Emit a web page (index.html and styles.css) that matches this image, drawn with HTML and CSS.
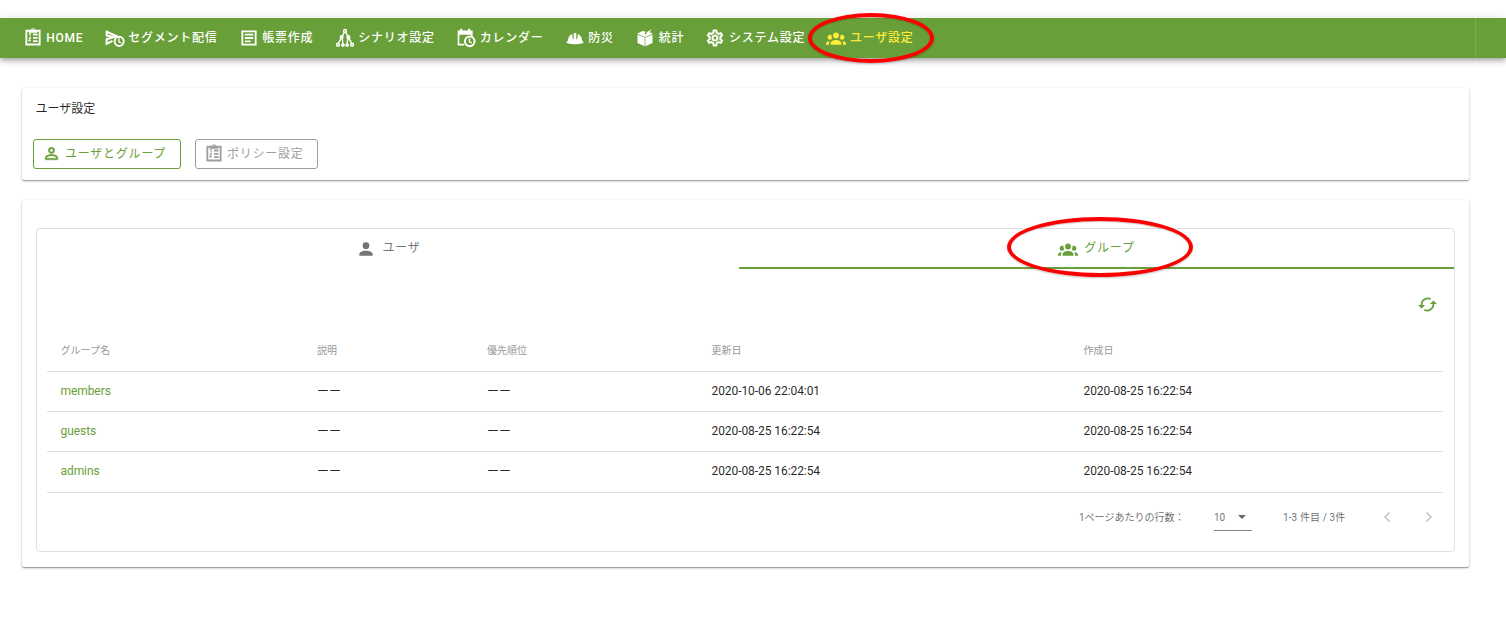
FILE: index.html
```html
<!DOCTYPE html>
<html lang="ja">
<head>
<meta charset="utf-8">
<title>ユーザ設定</title>
<link rel="stylesheet" href="styles.css">
</head>
<body>
<svg class="defs" width="0" height="0">
  <symbol id="clipboard" viewBox="0 0 24 24"><path fill="none" stroke="currentColor" stroke-width="2.200" d="M4 4.500H20V21H4ZM12 9H17.500M12 13H17.500M12 17H17.500"/><path fill="none" stroke="currentColor" stroke-width="1.300" d="M7 7.500H8.500V11M7 13H9L7 16.500H9.500"/><path fill-rule="evenodd" d="M7 3.500H9.200A3 3 0 0 1 14.800 3.500H17V7H7ZM12 2.500A1 1 0 0 0 12 4.500A1 1 0 0 0 12 2.500Z"/></symbol>
  <symbol id="send-clock" viewBox="0 0 24 24"><path fill="none" stroke="currentColor" stroke-width="2.500" d="M2 4.500L18 11.500M2 3V9L10 11L2 13.500V19L9 15.500"/><circle cx="17" cy="16" r="5.500" fill="none" stroke="currentColor" stroke-width="2.300"/><path fill="none" stroke="currentColor" stroke-width="1.600" d="M16.700 12.500V16.500L19.500 18"/></symbol>
  <symbol id="document" viewBox="0 0 24 24"><path fill="none" stroke="currentColor" stroke-width="2.200" d="M4 4H20V20H4ZM7 8H17M7 12H17M7 16H14"/></symbol>
  <symbol id="tree" viewBox="0 0 24 24"><path fill="none" stroke="currentColor" stroke-width="1.700" d="M11.300 5L8.500 10L4 18.500M12.700 5L15.500 10L20 18.500M8.500 12L9.500 19M15.500 12L14.500 19"/><g fill="none" stroke="currentColor" stroke-width="1.800"><circle cx="12" cy="3.500" r="1.700"/><circle cx="8" cy="11" r="1.600"/><circle cx="16" cy="11" r="1.600"/><circle cx="3.500" cy="20" r="1.700"/><circle cx="9.500" cy="20.500" r="1.400"/><circle cx="14.500" cy="20.500" r="1.400"/><circle cx="20.500" cy="20" r="1.700"/></g></symbol>
  <symbol id="calendar-clock" viewBox="0 0 24 24"><path d="M2 3H5V1H7.500V3H14.500V1H17V3H20V11H18V8H4V19H10V21H2Z"/><circle cx="16.500" cy="16" r="5.800" fill="none" stroke="currentColor" stroke-width="2.400"/><path fill="none" stroke="currentColor" stroke-width="1.700" d="M16.200 12.500V16.500L19 18"/></symbol>
  <symbol id="helmet" viewBox="0 0 24 24"><path d="M3.500 15Q4 9 8.500 7.300L9.500 13.500H10.500V6H13.500V13.500H14.500L15.500 7.300Q20 9 20.500 15L22 16.500V18Q12 21 2 18V16.500Z"/></symbol>
  <symbol id="box" viewBox="0 0 24 24"><path d="M3 8L11.600 11.500V22L3 18ZM21 8L12.400 11.500V22L21 18ZM2.500 6.800L9 3.500L13 4.500Q10.500 6 12.500 8Q14 3.500 21 1.500Q18.500 3 17.500 5L21.500 6.800L12 10.700Z"/></symbol>
  <symbol id="cog" viewBox="0 0 24 24"><path stroke="currentColor" stroke-width=".400" d="M12,8A4,4 0 0,1 16,12A4,4 0 0,1 12,16A4,4 0 0,1 8,12A4,4 0 0,1 12,8M12,10A2,2 0 0,0 10,12A2,2 0 0,0 12,14A2,2 0 0,0 14,12A2,2 0 0,0 12,10M10,22C9.75,22 9.54,21.82 9.5,21.58L9.13,18.93C8.5,18.68 7.96,18.34 7.44,17.94L4.95,18.95C4.73,19.03 4.46,18.95 4.34,18.73L2.34,15.27C2.21,15.05 2.27,14.78 2.46,14.63L4.57,12.97L4.5,12L4.57,11L2.46,9.37C2.27,9.22 2.21,8.95 2.34,8.73L4.34,5.27C4.46,5.05 4.73,4.96 4.95,5.05L7.44,6.05C7.96,5.66 8.5,5.32 9.13,5.07L9.5,2.42C9.54,2.18 9.75,2 10,2H14C14.25,2 14.46,2.18 14.5,2.42L14.87,5.07C15.5,5.32 16.04,5.66 16.56,6.05L19.05,5.05C19.27,4.96 19.54,5.05 19.66,5.27L21.66,8.73C21.79,8.95 21.73,9.22 21.54,9.37L19.43,11L19.5,12L19.43,13L21.54,14.63C21.73,14.78 21.79,15.05 21.66,15.27L19.66,18.73C19.54,18.95 19.27,19.04 19.05,18.95L16.56,17.95C16.04,18.34 15.5,18.68 14.87,18.93L14.5,21.58C14.46,21.82 14.25,22 14,22H10M11.25,4L10.88,6.61C9.68,6.86 8.62,7.5 7.85,8.39L5.44,7.35L4.69,8.65L6.8,10.2C6.4,11.37 6.4,12.64 6.8,13.8L4.68,15.36L5.43,16.66L7.86,15.62C8.63,16.5 9.68,17.14 10.87,17.38L11.24,20H12.76L13.13,17.39C14.32,17.14 15.37,16.5 16.14,15.62L18.57,16.66L19.32,15.36L17.2,13.81C17.6,12.64 17.6,11.37 17.2,10.2L19.31,8.65L18.56,7.35L16.15,8.39C15.38,7.5 14.32,6.86 13.12,6.62L12.75,4H11.25Z"/></symbol>
  <symbol id="group" viewBox="0 0 24 24"><path d="M12,5.5A3.5,3.5 0 0,1 15.5,9A3.5,3.5 0 0,1 12,12.5A3.5,3.5 0 0,1 8.5,9A3.5,3.5 0 0,1 12,5.5M5,8C5.56,8 6.08,8.15 6.53,8.42C6.38,9.85 6.8,11.27 7.66,12.38C7.16,13.34 6.16,14 5,14A3,3 0 0,1 2,11A3,3 0 0,1 5,8M19,8A3,3 0 0,1 22,11A3,3 0 0,1 19,14C17.84,14 16.84,13.34 16.34,12.38C17.2,11.27 17.62,9.85 17.47,8.42C17.92,8.15 18.44,8 19,8M5.5,18.25C5.5,16.18 8.41,14.5 12,14.5C15.59,14.5 18.5,16.18 18.5,18.25V20H5.5V18.25M0,20V18.5C0,17.11 1.89,15.94 4.45,15.6C3.86,16.28 3.5,17.22 3.5,18.25V20H0M24,20H20.5V18.25C20.5,17.22 20.14,16.28 19.55,15.6C22.11,15.94 24,17.11 24,18.5V20Z"/></symbol>
  <symbol id="person-outline" viewBox="0 0 24 24"><path stroke="currentColor" stroke-width=".500" d="M12,4A4,4 0 0,1 16,8A4,4 0 0,1 12,12A4,4 0 0,1 8,8A4,4 0 0,1 12,4M12,6A2,2 0 0,0 10,8A2,2 0 0,0 12,10A2,2 0 0,0 14,8A2,2 0 0,0 12,6M12,13C14.67,13 20,14.33 20,17V20H4V17C4,14.33 9.33,13 12,13M12,14.9C9.03,14.9 5.9,16.36 5.9,17V18.1H18.1V17C18.1,16.36 14.97,14.9 12,14.9Z"/></symbol>
  <symbol id="person" viewBox="0 0 24 24"><path d="M12,4A4,4 0 0,1 16,8A4,4 0 0,1 12,12A4,4 0 0,1 8,8A4,4 0 0,1 12,4M12,14C16.42,14 20,15.79 20,18V20H4V18C4,15.79 7.58,14 12,14Z"/></symbol>
  <symbol id="refresh" viewBox="0 0 24 24"><path fill="none" stroke="currentColor" stroke-width="2.200" d="M16 5.200A8 8 0 0 0 4.500 12V14M8 18.800A8 8 0 0 0 19.500 12V10"/><path d="M0 12.500H9L4.500 17ZM15 11.500H24L19.500 7Z"/></symbol>
</svg>

<nav class="topbar">
  <a class="nav-item nav-home"><svg><use href="#clipboard"/></svg>HOME</a>
  <a class="nav-item"><svg><use href="#send-clock"/></svg>セグメント配信</a>
  <a class="nav-item"><svg><use href="#document"/></svg>帳票作成</a>
  <a class="nav-item"><svg><use href="#tree"/></svg>シナリオ設定</a>
  <a class="nav-item"><svg><use href="#calendar-clock"/></svg>カレンダー</a>
  <a class="nav-item"><svg><use href="#helmet"/></svg>防災</a>
  <a class="nav-item"><svg><use href="#box"/></svg>統計</a>
  <a class="nav-item"><svg><use href="#cog"/></svg>システム設定</a>
  <a class="nav-item active"><svg><use href="#group"/></svg>ユーザ設定</a>
  <span class="nav-end"></span>
</nav>

<main>
  <section class="card settings">
    <h1>ユーザ設定</h1>
    <div class="buttons">
      <button class="btn selected"><svg><use href="#person-outline"/></svg>ユーザとグループ</button>
      <button class="btn"><svg><use href="#clipboard"/></svg>ポリシー設定</button>
    </div>
  </section>

  <section class="card listing">
    <div class="panel">
      <div class="tabs">
        <div class="tab"><svg><use href="#person"/></svg>ユーザ</div>
        <div class="tab current"><svg><use href="#group"/></svg>グループ</div>
      </div>
      <div class="tools"><svg><use href="#refresh"/></svg></div>
      <div class="table">
        <div class="row head"><span>グループ名</span><span>説明</span><span>優先順位</span><span>更新日</span><span>作成日</span></div>
        <div class="row"><a>members</a><span class="none">ーー</span><span class="none">ーー</span><span>2020-10-06 22:04:01</span><span>2020-08-25 16:22:54</span></div>
        <div class="row"><a>guests</a><span class="none">ーー</span><span class="none">ーー</span><span>2020-08-25 16:22:54</span><span>2020-08-25 16:22:54</span></div>
        <div class="row last"><a>admins</a><span class="none">ーー</span><span class="none">ーー</span><span>2020-08-25 16:22:54</span><span>2020-08-25 16:22:54</span></div>
      </div>
      <div class="pager">
        <span class="per-page">1ページあたりの行数：</span>
        <span class="select">10<i></i></span>
        <span class="range">1-3 件目 / 3件</span>
        <svg class="arrow" viewBox="0 0 8 12"><path d="M6.500 1.500L2 6L6.500 10.500"/></svg>
        <svg class="arrow" viewBox="0 0 8 12"><path d="M1.500 1.500L6 6L1.500 10.500"/></svg>
      </div>
    </div>
  </section>
</main>
<div class="mark mark-nav"></div>
<div class="mark mark-tab"></div>
</body>
</html>
```
FILE: styles.css
```css
* { box-sizing: border-box; }
body {
  margin: 0;
  padding-top: 18px;
  height: 644px;
  overflow: hidden;
  position: relative;
  background: #fff;
  color: rgba(0, 0, 0, .87);
  font: 12px/18px Roboto, "Noto Sans CJK JP", sans-serif;
}
svg { fill: currentColor; flex: none; }
.defs { position: absolute; }
.topbar {
  display: flex;
  height: 40px;
  padding-left: 22.6px;
  background: #689f38;
  color: #fff;
  box-shadow: 0 2px 4px -1px rgba(0, 0, 0, .2), 0 4px 5px rgba(0, 0, 0, .14), 0 1px 10px rgba(0, 0, 0, .12);
}
.nav-item {
  display: flex;
  align-items: center;
  height: 39px;
  margin-right: 21.2px;
  font-weight: 500;
  letter-spacing: .75px;
  white-space: nowrap;
}
.nav-item svg { width: 20px; height: 20px; margin: 0 3.7px 0 0; }
.nav-item.nav-home svg { margin-bottom: 2px; }
.nav-home { height: 40px; }
.active { color: #ffeb3b; }
.nav-end { width: 31px; margin-left: auto; border-left: 1px solid #79ae4c; }

.card {
  width: 1447px;
  margin-left: 22px;
  border-radius: 2px;
  background: #fff;
  box-shadow: 0 1px 1px rgba(0, 0, 0, .3), 0 1px 3px rgba(0, 0, 0, .2);
}
.settings { height: 92px; margin-top: 30px; padding: 12px 11px 0; }
h1 { margin: 0 0 21px 2.6px; font-size: 12px; font-weight: 400; line-height: 18px; }
.buttons { display: flex; gap: 14px; }
.btn {
  display: flex;
  align-items: center;
  height: 30px;
  width: 123px;
  padding: 0 0 1px 8px;
  border: 1px solid #9e9e9e;
  border-radius: 3px;
  background: none;
  color: #9e9e9e;
  font: inherit;
  letter-spacing: .75px;
  white-space: nowrap;
}
.btn svg { width: 20px; height: 20px; margin: 0 3px 1px 0; }
.btn.selected { width: 148px; border-color: #689f38; color: #689f38; }
.btn.selected svg { width: 19px; height: 19px; margin: 0 4px 0 0; }

.listing { height: 367px; margin-top: 20px; padding: 28px 14px 0; }
.panel { height: 324px; border: 1px solid #e0e0e0; border-radius: 4px; }
.tabs { display: flex; height: 40px; }
.tab {
  display: flex;
  align-items: center;
  justify-content: center;
  width: 702px;
  padding: 0 0 2px 1px;
  color: #757575;
  letter-spacing: .75px;
}
.tab svg { width: 20px; height: 20px; margin: 1px 6px 0 0; }
.tab.current { width: 715px; border-bottom: 2px solid #689f38; color: #689f38; padding: 0; }
.tools { display: flex; justify-content: flex-end; height: 61px; padding: 26px 17px 0 0; color: #689f38; }
.tools svg { width: 19px; height: 19px; }
.table { margin: 0 11px 0 10px; }
.row {
  display: grid;
  grid-template-columns: 256.5px 170px 224.5px 372px 1fr;
  height: 40px;
  align-items: center;
  padding: 0 0 2px 13.5px;
  border-bottom: 1px solid #e0e0e0;
  letter-spacing: -.07px;
}
.row a { color: #689f38; }
.row .none { padding-top: 2px; }
.row.head { height: 42px; padding-bottom: 0; color: #999; font-size: 10px; letter-spacing: 0; }
.row.last { height: 41px; }
.pager { display: flex; align-items: center; height: 50px; padding-left: 1042px; font-size: 10px; color: rgba(0, 0, 0, .6); }
.pager > * { flex: none; }
.per-page { width: 135px; }
.select { display: flex; align-items: center; width: 38px; height: 26px; margin-right: 31px; border-bottom: 1px solid #858585; }
.select i { margin: 0 0 2px 13px; border: 4px solid transparent; border-top: 4px solid #666; border-bottom: 0; }
.range { width: 100px; letter-spacing: .1px; }
.arrow { width: 8px; height: 12px; margin: 0 34px 2px 0; fill: none; stroke: #bbb; stroke-width: 1.3; }

.mark { position: absolute; border: 4px solid #fc0000; border-radius: 50%; box-shadow: 0 1px 2px rgba(0, 0, 0, .25), inset 0 1px 1px rgba(0, 0, 0, .2); }
.mark-nav { left: 808px; top: 13px; width: 126px; height: 50px; }
.mark-tab { left: 1007px; top: 217px; width: 186px; height: 60px; }
```
